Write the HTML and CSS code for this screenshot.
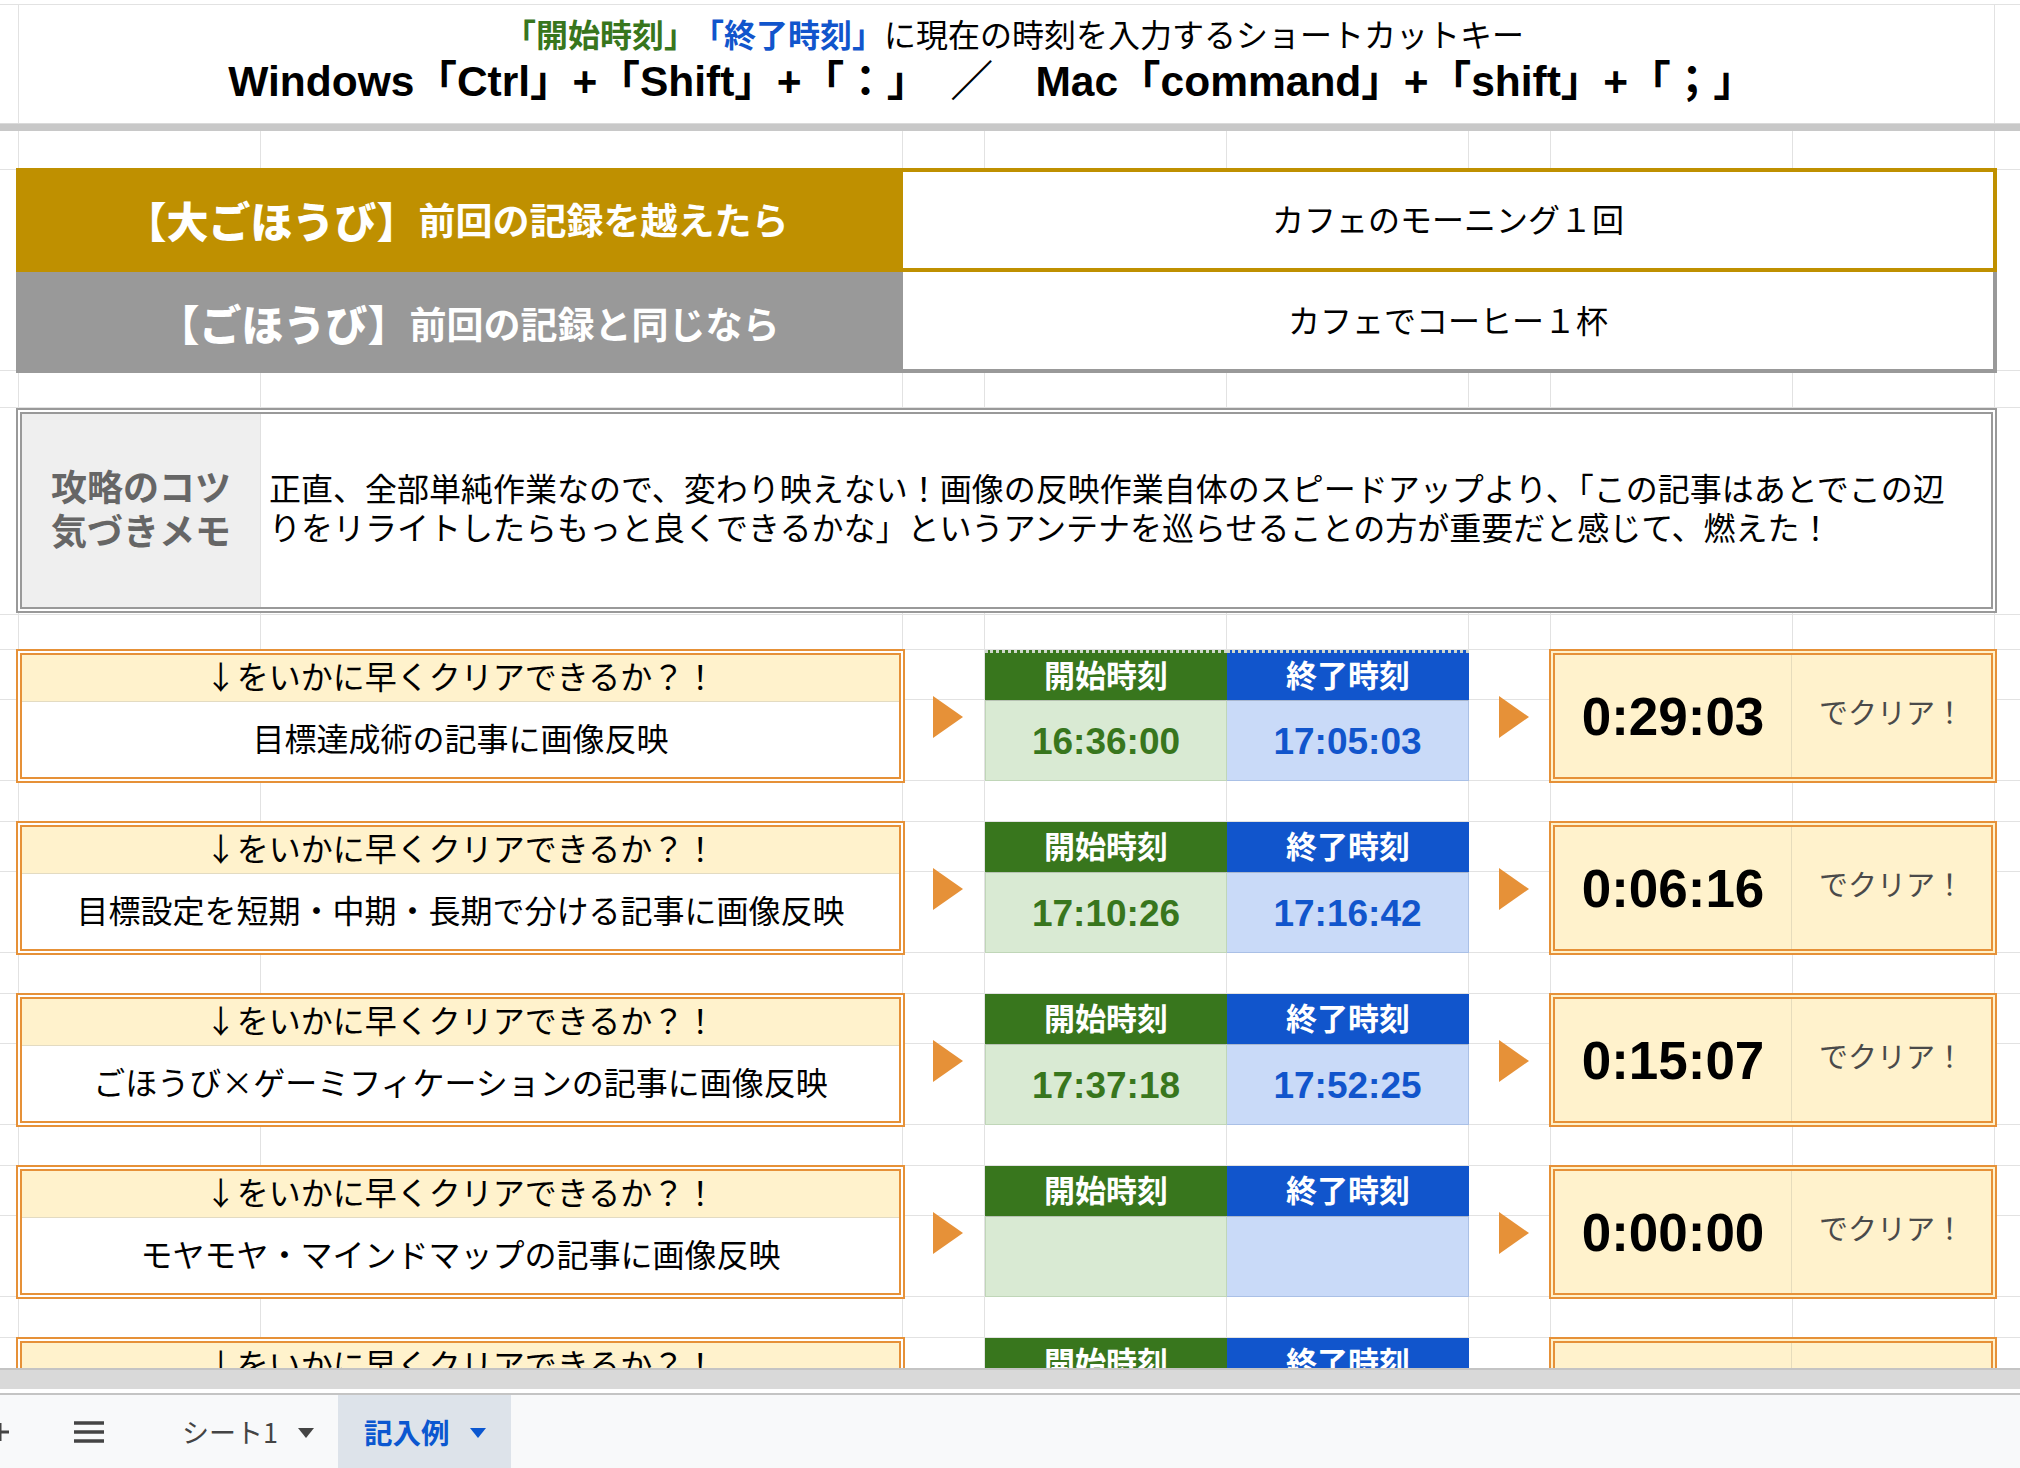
FILE: index.html
```html
<!DOCTYPE html>
<html lang="ja">
<head>
    <meta charset="UTF-8">
    <title>記入例 - ごほうびタイムアタック</title>
    <link rel="stylesheet" href="styles.css">
</head>
<body>
<div class="app">
    <header class="notice">
        <p class="notice-lead"><b class="c-start">「開始時刻」</b><b class="c-end">「終了時刻」</b>に現在の時刻を入力するショートカットキー</p>
        <p class="notice-keys">Windows「Ctrl」+「Shift」+「：」　／　Mac「command」+「shift」+「；」</p>
    </header>
    <div class="freeze"></div>

    <main class="sheet">
        <div class="band band-39"></div>

        <div class="band band-reward">
            <div class="reward">
                <div class="reward-label label-gold"><span class="big">【大ごほうび】</span>前回の記録を越えたら</div>
                <div class="reward-value value-gold">カフェのモーニング１回</div>
                <div class="reward-label label-gray"><span class="big">【ごほうび】</span>前回の記録と同じなら</div>
                <div class="reward-value value-gray">カフェでコーヒー１杯</div>
            </div>
        </div>

        <div class="band band-37"></div>

        <div class="band band-memo">
            <div class="memo">
                <div class="memo-label">攻略のコツ<br>気づきメモ</div>
                <div class="memo-text">正直、全部単純作業なので、変わり映えない！画像の反映作業自体のスピードアップより、「この記事はあとでこの辺<br>りをリライトしたらもっと良くできるかな」というアンテナを巡らせることの方が重要だと感じて、燃えた！</div>
            </div>
        </div>

        <div class="band band-35"></div>

        <!-- 1 -->
        <div class="band block">
            <div class="task">
                <div class="task-head">↓をいかに早くクリアできるか？！</div>
                <div class="task-body">目標達成術の記事に画像反映</div>
            </div>
            <div class="arrow arrow-a"><svg width="30" height="42" viewBox="0 0 30 42"><polygon points="0,0 30,21 0,42" fill="#e69138"/></svg></div>
            <div class="time marked">
                <div class="time-head head-start">開始時刻</div>
                <div class="time-head head-end">終了時刻</div>
                <div class="time-val val-start">16:36:00</div>
                <div class="time-val val-end">17:05:03</div>
            </div>
            <div class="arrow arrow-b"><svg width="30" height="42" viewBox="0 0 30 42"><polygon points="0,0 30,21 0,42" fill="#e69138"/></svg></div>
            <div class="result">
                <div class="result-time">0:29:03</div>
                <div class="result-note">でクリア！</div>
            </div>
        </div>

        <!-- 2 -->
        <div class="band block">
            <div class="task">
                <div class="task-head">↓をいかに早くクリアできるか？！</div>
                <div class="task-body">目標設定を短期・中期・長期で分ける記事に画像反映</div>
            </div>
            <div class="arrow arrow-a"><svg width="30" height="42" viewBox="0 0 30 42"><polygon points="0,0 30,21 0,42" fill="#e69138"/></svg></div>
            <div class="time">
                <div class="time-head head-start">開始時刻</div>
                <div class="time-head head-end">終了時刻</div>
                <div class="time-val val-start">17:10:26</div>
                <div class="time-val val-end">17:16:42</div>
            </div>
            <div class="arrow arrow-b"><svg width="30" height="42" viewBox="0 0 30 42"><polygon points="0,0 30,21 0,42" fill="#e69138"/></svg></div>
            <div class="result">
                <div class="result-time">0:06:16</div>
                <div class="result-note">でクリア！</div>
            </div>
        </div>

        <!-- 3 -->
        <div class="band block">
            <div class="task">
                <div class="task-head">↓をいかに早くクリアできるか？！</div>
                <div class="task-body">ごほうび×ゲーミフィケーションの記事に画像反映</div>
            </div>
            <div class="arrow arrow-a"><svg width="30" height="42" viewBox="0 0 30 42"><polygon points="0,0 30,21 0,42" fill="#e69138"/></svg></div>
            <div class="time">
                <div class="time-head head-start">開始時刻</div>
                <div class="time-head head-end">終了時刻</div>
                <div class="time-val val-start">17:37:18</div>
                <div class="time-val val-end">17:52:25</div>
            </div>
            <div class="arrow arrow-b"><svg width="30" height="42" viewBox="0 0 30 42"><polygon points="0,0 30,21 0,42" fill="#e69138"/></svg></div>
            <div class="result">
                <div class="result-time">0:15:07</div>
                <div class="result-note">でクリア！</div>
            </div>
        </div>

        <!-- 4 -->
        <div class="band block">
            <div class="task">
                <div class="task-head">↓をいかに早くクリアできるか？！</div>
                <div class="task-body">モヤモヤ・マインドマップの記事に画像反映</div>
            </div>
            <div class="arrow arrow-a"><svg width="30" height="42" viewBox="0 0 30 42"><polygon points="0,0 30,21 0,42" fill="#e69138"/></svg></div>
            <div class="time">
                <div class="time-head head-start">開始時刻</div>
                <div class="time-head head-end">終了時刻</div>
                <div class="time-val val-start"></div>
                <div class="time-val val-end"></div>
            </div>
            <div class="arrow arrow-b"><svg width="30" height="42" viewBox="0 0 30 42"><polygon points="0,0 30,21 0,42" fill="#e69138"/></svg></div>
            <div class="result">
                <div class="result-time">0:00:00</div>
                <div class="result-note">でクリア！</div>
            </div>
        </div>

        <!-- 5 (cut off by the scrollbar) -->
        <div class="band block">
            <div class="task">
                <div class="task-head">↓をいかに早くクリアできるか？！</div>
                <div class="task-body"></div>
            </div>
            <div class="arrow arrow-a"><svg width="30" height="42" viewBox="0 0 30 42"><polygon points="0,0 30,21 0,42" fill="#e69138"/></svg></div>
            <div class="time">
                <div class="time-head head-start">開始時刻</div>
                <div class="time-head head-end">終了時刻</div>
                <div class="time-val val-start"></div>
                <div class="time-val val-end"></div>
            </div>
            <div class="arrow arrow-b"><svg width="30" height="42" viewBox="0 0 30 42"><polygon points="0,0 30,21 0,42" fill="#e69138"/></svg></div>
            <div class="result">
                <div class="result-time">0:00:00</div>
                <div class="result-note">でクリア！</div>
            </div>
        </div>
    </main>

    <div class="hscroll"></div>

    <footer class="tabs">
        <span class="tab-icon tab-add"><svg width="20" height="20" viewBox="0 0 20 20"><path d="M10 1v18M1 10h18" stroke="#444" stroke-width="3"/></svg></span>
        <span class="tab-icon tab-list"><svg width="30" height="22" viewBox="0 0 30 22"><path d="M0 2h30M0 11h30M0 20h30" stroke="#444" stroke-width="3.5"/></svg></span>
        <span class="tab">シート1<svg class="caret" width="16" height="10" viewBox="0 0 16 10"><polygon points="0,0 16,0 8,10" fill="#444"/></svg></span>
        <span class="tab tab-active">記入例<svg class="caret" width="16" height="10" viewBox="0 0 16 10"><polygon points="0,0 16,0 8,10" fill="#0b57d0"/></svg></span>
    </footer>
</div>
</body>
</html>
```

FILE: styles.css
```css
* {
    margin: 0;
    padding: 0;
    box-sizing: border-box;
}

body {
    width: 2020px;
    height: 1468px;
    overflow: hidden;
    background: #fff;
    font-family: "Noto Sans CJK JP", sans-serif;
    color: #000;
}

.app {
    display: flex;
    flex-direction: column;
    height: 1468px;
}

/* ---------- top notice row ---------- */

.notice {
    height: 119px;
    margin-top: 4px;
    border-top: 1px solid #e2e2e2;
    padding-top: 7px;
    text-align: center;
    background:
        linear-gradient(#e2e2e2, #e2e2e2) 18px 0 / 1px 100% no-repeat,
        linear-gradient(#e2e2e2, #e2e2e2) 1994px 0 / 1px 100% no-repeat;
}

.notice-lead {
    font-size: 32px;
    line-height: 42px;
    padding-left: 8px;
}

.notice-lead b {
    font-weight: 700;
}

.c-start { color: #38761d; margin-right: 12px; }
.c-end { color: #1155cc; }

.notice-keys {
    margin-top: 2px;
    font-family: "Liberation Sans", "Noto Sans CJK JP", sans-serif;
    font-weight: 700;
    font-size: 42.5px;
    line-height: 52px;
    padding-right: 36px;
}

.freeze {
    height: 8px;
    background: #c8c8c8;
    border-top: 1px solid #dadada;
}

/* ---------- sheet grid ---------- */

.sheet {
    height: 1237px;
    overflow: hidden;
    background:
        linear-gradient(#e2e2e2, #e2e2e2) 18px 0 / 1px 100% no-repeat,
        linear-gradient(#e2e2e2, #e2e2e2) 260px 0 / 1px 100% no-repeat,
        linear-gradient(#e2e2e2, #e2e2e2) 902px 0 / 1px 100% no-repeat,
        linear-gradient(#e2e2e2, #e2e2e2) 984px 0 / 1px 100% no-repeat,
        linear-gradient(#e2e2e2, #e2e2e2) 1226px 0 / 1px 100% no-repeat,
        linear-gradient(#e2e2e2, #e2e2e2) 1468px 0 / 1px 100% no-repeat,
        linear-gradient(#e2e2e2, #e2e2e2) 1550px 0 / 1px 100% no-repeat,
        linear-gradient(#e2e2e2, #e2e2e2) 1792px 0 / 1px 100% no-repeat,
        linear-gradient(#e2e2e2, #e2e2e2) 1994px 0 / 1px 100% no-repeat;
}

.band {
    display: grid;
    grid-template-columns: 19px 242px 642px 82px 242px 242px 82px 242px 202px 1fr;
    border-bottom: 1px solid #e2e2e2;
    flex-shrink: 0;
}

.band-39 { height: 39px; }
.band-37 { height: 37px; }
.band-35 { height: 35px; }
.band-reward { height: 201px; }
.band-memo { height: 207px; }

/* ---------- reward rows ---------- */

.reward {
    grid-column: 2 / 10;
    align-self: start;
    height: 205px;
    margin: -2px -2px 0 -3px;
    display: grid;
    grid-template-columns: 887px 1fr;
    grid-template-rows: 104px 101px;
}

.reward-label {
    display: flex;
    align-items: center;
    justify-content: center;
    color: #fff;
    font-weight: 700;
    font-size: 37px;
    padding-right: 6px;
}

.reward-label .big {
    font-size: 42px;
    font-weight: 900;
}

.label-gold { background: #bf9000; padding-bottom: 2px; }
.label-gray { background: #999; padding-left: 24px; }

.reward-value {
    display: flex;
    align-items: center;
    justify-content: center;
    font-size: 32px;
    background: #fff;
    padding-bottom: 4px;
}

.value-gold {
    border: 4px solid #bf9000;
    border-left: none;
}

.value-gray {
    border-right: 4px solid #999;
    border-bottom: 4px solid #999;
}

/* ---------- memo ---------- */

.memo {
    grid-column: 2 / 10;
    align-self: start;
    height: 205px;
    margin: 0 -2px 0 -3px;
    border: 6px double #999;
    display: grid;
    grid-template-columns: 239px 1fr;
    background: #fff;
}

.memo-label {
    background: #efefef;
    border-right: 1px solid #e0e0e0;
    display: flex;
    align-items: center;
    justify-content: center;
    text-align: center;
    color: #666;
    font-weight: 700;
    font-size: 36px;
    line-height: 44px;
    padding-bottom: 8px;
}

.memo-text {
    display: flex;
    align-items: center;
    padding: 0 0 8px 8px;
    font-size: 32px;
    line-height: 39px;
}

/* ---------- timed task blocks ---------- */

.block {
    height: 172px;
    grid-template-rows: 50px 81px 40px;
    background:
        linear-gradient(#e2e2e2, #e2e2e2) 0 49px / 100% 1px no-repeat,
        linear-gradient(#e2e2e2, #e2e2e2) 0 130px / 100% 1px no-repeat;
}

.task {
    grid-column: 2 / 4;
    grid-row: 1 / 3;
    margin: -1px -2px -2px -3px;
    border: 6px double #e69138;
    display: flex;
    flex-direction: column;
    background: #fff;
    font-size: 32px;
    text-align: center;
}

.task-head {
    flex: 0 0 47px;
    background: #fff2cc;
    border-bottom: 1px solid #e3dbc2;
    line-height: 40px;
}

.task-body {
    flex: 1;
    display: flex;
    align-items: center;
    justify-content: center;
    padding-bottom: 6px;
}

.arrow {
    grid-row: 1 / 3;
    display: flex;
    align-items: center;
    justify-content: center;
    padding-top: 2px;
}

.arrow-a { grid-column: 4; padding-left: 8px; }
.arrow-b { grid-column: 7; padding-left: 8px; }

.time {
    grid-column: 5 / 7;
    grid-row: 1 / 3;
    display: grid;
    grid-template-columns: 1fr 1fr;
    grid-template-rows: 50px 1fr;
}

.time-head {
    display: flex;
    align-items: center;
    justify-content: center;
    color: #fff;
    font-weight: 700;
    font-size: 31px;
    padding-bottom: 6px;
}

.head-start { background: #38761d; }
.head-end { background: #1155cc; }

.time.marked .time-head {
    border-top: 3px dotted #cfd8cc;
}

.time-val {
    display: flex;
    align-items: center;
    justify-content: center;
    font-family: "Liberation Sans", "Noto Sans CJK JP", sans-serif;
    font-weight: 700;
    font-size: 37px;
    padding-top: 2px;
}

.val-start {
    background: #d9ead3;
    color: #38761d;
    border: 1px solid #c0d6b8;
    border-top-color: #b7c2b3;
}

.val-end {
    background: #c9daf8;
    color: #1155cc;
    border: 1px solid #aac0e6;
    border-top-color: #a9b7cf;
    border-left: none;
}

.result {
    grid-column: 8 / 10;
    grid-row: 1 / 3;
    margin: -1px -2px -2px -2px;
    border: 6px double #e69138;
    background: #fff2cc;
    display: grid;
    grid-template-columns: 236px 1fr;
}

.result-time {
    display: flex;
    align-items: center;
    justify-content: center;
    font-family: "Liberation Sans", "Noto Sans CJK JP", sans-serif;
    font-weight: 700;
    font-size: 53px;
}

.result-note {
    display: flex;
    align-items: center;
    justify-content: center;
    border-left: 1px solid #e6dcbc;
    color: #4a4a4a;
    font-size: 29px;
    padding-bottom: 10px;
}

/* ---------- bottom bars ---------- */

.hscroll {
    height: 27px;
    border-top: 2px solid #c4c4c4;
    border-bottom: 2px solid #c4c4c4;
    background: linear-gradient(#d9d9d9, #d9d9d9) 0 0 / 100% 19px no-repeat, #fff;
}

.tabs {
    flex: 1;
    background: #f8f9fa;
    display: flex;
    align-items: stretch;
    font-size: 27px;
    color: #444;
}

.tab-icon {
    display: flex;
    align-items: center;
}

.tab-add {
    margin-left: -10px;
    width: 84px;
}

.tab-list {
    width: 106px;
}

.tab {
    display: flex;
    align-items: center;
    gap: 20px;
    padding: 0 24px 0 2px;
}

.tab .caret {
    margin-top: 2px;
}

.tab-active {
    background: #dde3ea;
    color: #0b57d0;
    font-weight: 700;
    font-size: 28.5px;
    padding: 0 20px 0 26px;
    width: 173px;
}
```
